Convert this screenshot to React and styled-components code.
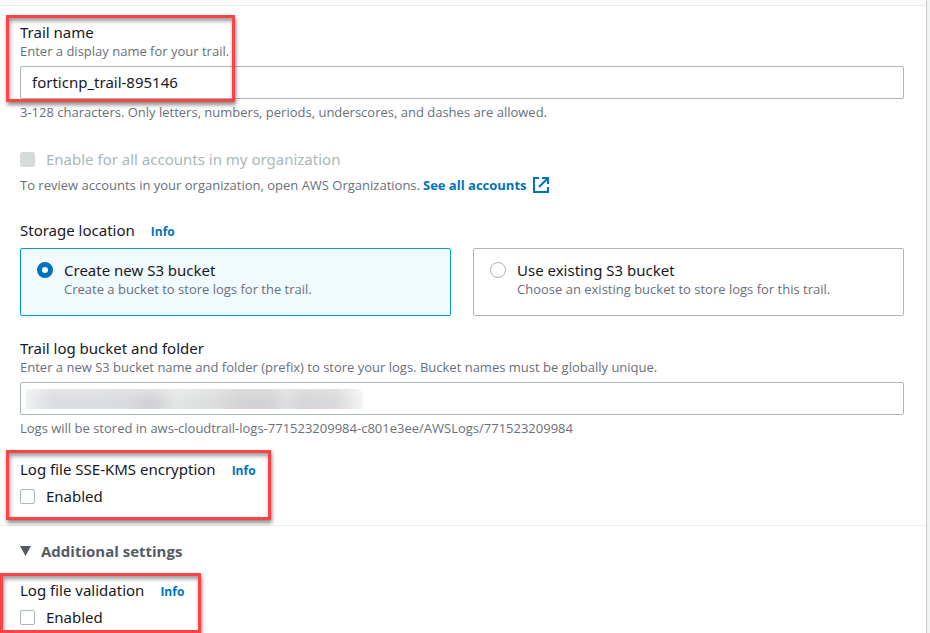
import React, { useState } from "react";
import styled, { createGlobalStyle, css } from "styled-components";

const GlobalStyle = createGlobalStyle`
  *, *::before, *::after { box-sizing: border-box; }
  body {
    margin: 0;
    background: #f2f3f3;
    color: #16191f;
    font-family: "Noto Sans", "Open Sans", sans-serif;
    font-size: 15px;
    line-height: 20px;
  }
`;

const Page = styled.main`
  padding-right: 3px;
  overflow: hidden;
`;

const Panel = styled.form`
  background: #fff;
  border-right: 1px solid #c3cccc;
  min-height: 100vh;
`;

const PanelHeader = styled.div`
  height: 6px;
  background: #fafafa;
  border-bottom: 1px solid #eaeded;
`;

const Section = styled.section`
  padding: 16px 22px 19px 20px;
`;

const AdditionalSection = styled.section`
  border-top: 1px solid #eaeded;
  padding: 15px 22px 6px 20px;
`;

const Group = styled.div`
  position: relative;
  display: flex;
  flex-direction: column;
  margin-top: ${({ $gap = 0 }) => $gap}px;
`;

const LabelRow = styled.div`
  display: flex;
  align-items: baseline;
  gap: 16px;
  height: 20px;
`;

const Label = styled.label`
  line-height: 20px;
`;

const Hint = styled.p`
  margin: 0;
  color: #687078;
  font-family: "Open Sans", "Noto Sans", sans-serif;
  font-size: 13px;
  line-height: 18px;
`;

const Link = styled.a`
  display: inline-flex;
  align-items: center;
  gap: 6px;
  color: #0073bb;
  font-family: "Open Sans", "Noto Sans", sans-serif;
  font-size: 13px;
  font-weight: 700;
  line-height: 18px;
  text-decoration: none;
`;

const InfoLink = styled(Link)`
  font-size: 12px;
`;

const ReviewLine = styled.div`
  display: flex;
  flex-wrap: wrap;
  align-items: center;
  gap: 3px;
  margin-top: 7px;
`;

const InputWrap = styled.div`
  position: relative;
  margin: 6px 0 4px;
`;

const TextInput = styled.input`
  display: block;
  width: 100%;
  height: 33px;
  padding: 0 11px 2px;
  border: 1px solid #aab7b8;
  border-radius: 2px;
  background: #fff;
  color: #16191f;
  font: inherit;
`;

const Redaction = styled.div`
  position: absolute;
  left: 6px;
  top: 7px;
  width: 337px;
  height: 20px;
  background:
    radial-gradient(ellipse 24px 14px at 124px 16px, rgba(200, 200, 204, 0.5), rgba(200, 200, 204, 0)),
    linear-gradient(180deg, rgba(255, 255, 255, 0.2), rgba(255, 255, 255, 0) 60%),
    linear-gradient(90deg, #f0f1f2, #dcdde0 8%, #dcdde0 20%, #d8d9db 38%, #e4e6e6 45%, #dcdddd 55%, #d3d3d5 64%, #d3d3d5 72%, #dedfe0 77%, #d6d6d8 82%, #dadadc 92%, #f4f5f5);
`;

const CheckRow = styled.label`
  display: flex;
  align-items: center;
  gap: 11px;
  line-height: 20px;
  color: ${({ $disabled }) => ($disabled ? "#aab7b8" : "#16191f")};
  margin-top: ${({ $gap = 0 }) => $gap}px;
`;

const Checkbox = styled.input`
  appearance: none;
  flex: none;
  width: 15px;
  height: 15px;
  margin: 1px 0 0;
  border: 1px solid #aab7b8;
  border-radius: 2px;
  background: #fff;
  &:checked { background: #0073bb; border-color: #0073bb; }
  &:disabled { background: #d5dbdb; border-color: #d5dbdb; }
`;

const Tiles = styled.div`
  display: grid;
  grid-template-columns: 1fr 1fr;
  gap: 22px;
  margin-top: 8px;
`;

const Tile = styled.label`
  display: flex;
  gap: 11px;
  padding: 11px 16px 17px;
  border: 1px solid #aab7b8;
  border-radius: 2px;
  ${({ $selected }) =>
    $selected &&
    css`
      border-color: #00a1c9;
      background: #f1faff;
    `}
`;

const Radio = styled.input`
  appearance: none;
  flex: none;
  width: 16px;
  height: 16px;
  margin: 2px 0 0;
  border: 1px solid #aab7b8;
  border-radius: 50%;
  background: #fff;
  &:checked { border: 5px solid #0073bb; }
`;

const ExpandButton = styled.button`
  display: flex;
  align-items: center;
  gap: 10px;
  padding: 0;
  border: 0;
  background: none;
  color: #545b64;
  font: inherit;
  font-family: "Open Sans", "Noto Sans", sans-serif;
  font-weight: 700;
`;

const Callout = styled.div`
  position: absolute;
  left: ${({ $left }) => $left}px;
  top: ${({ $top }) => $top}px;
  width: ${({ $width }) => $width}px;
  height: ${({ $height }) => $height}px;
  border: 3px solid #ff4343;
  box-shadow: 1px 3px 4px rgba(0, 0, 0, 0.45), inset 1px 3px 4px rgba(0, 0, 0, 0.4);
  pointer-events: none;
`;

const ExternalIcon = () => (
  <svg width="16" height="16" viewBox="0 0 16 16" fill="none" stroke="#0073bb" strokeWidth="2" aria-hidden="true">
    <path d="M6 1H1v14h14v-5M9 1h6v6M15 1L6 10" />
  </svg>
);

const Caret = () => (
  <svg width="11" height="10" viewBox="0 0 11 10" aria-hidden="true">
    <path d="M0 0h11L5.500 10z" fill="#545b64" />
  </svg>
);

function StorageTile({ value, title, text, selected, onSelect }) {
  return (
    <Tile $selected={selected}>
      <Radio type="radio" name="storage" value={value} checked={selected} onChange={() => onSelect(value)} />
      <div>
        <div>{title}</div>
        <Hint>{text}</Hint>
      </div>
    </Tile>
  );
}

function EnabledField({ title, gap, callout }) {
  return (
    <Group $gap={gap} role="group" aria-label={title}>
      <LabelRow>
        <span>{title}</span>
        <InfoLink href="#info">Info</InfoLink>
      </LabelRow>
      <CheckRow $gap={7}>
        <Checkbox type="checkbox" />
        Enabled
      </CheckRow>
      <Callout {...callout} />
    </Group>
  );
}

export default function App() {
  const [storage, setStorage] = useState("new");
  const [open, setOpen] = useState(true);

  return (
    <Page>
      <GlobalStyle />
      <Panel>
        <PanelHeader />
        <Section>
          <Group>
            <Label htmlFor="trail-name">Trail name</Label>
            <Hint>Enter a display name for your trail.</Hint>
            <InputWrap>
              <TextInput id="trail-name" defaultValue="forticnp_trail-895146" />
            </InputWrap>
            <Hint>3-128 characters. Only letters, numbers, periods, underscores, and dashes are allowed.</Hint>
            <Callout $left={-14} $top={-7} $width={229} $height={87} />
          </Group>

          <Group $gap={28}>
            <CheckRow $disabled>
              <Checkbox type="checkbox" disabled />
              Enable for all accounts in my organization
            </CheckRow>
            <ReviewLine>
              <Hint>To review accounts in your organization, open AWS Organizations.</Hint>
              <Link href="#accounts">
                See all accounts
                <ExternalIcon />
              </Link>
            </ReviewLine>
          </Group>

          <Group $gap={26} role="radiogroup" aria-label="Storage location">
            <LabelRow>
              <span>Storage location</span>
              <InfoLink href="#info">Info</InfoLink>
            </LabelRow>
            <Tiles>
              <StorageTile
                value="new"
                title="Create new S3 bucket"
                text="Create a bucket to store logs for the trail."
                selected={storage === "new"}
                onSelect={setStorage}
              />
              <StorageTile
                value="existing"
                title="Use existing S3 bucket"
                text="Choose an existing bucket to store logs for this trail."
                selected={storage === "existing"}
                onSelect={setStorage}
              />
            </Tiles>
          </Group>

          <Group $gap={22}>
            <Label htmlFor="bucket">Trail log bucket and folder</Label>
            <Hint>Enter a new S3 bucket name and folder (prefix) to store your logs. Bucket names must be globally unique.</Hint>
            <InputWrap>
              <TextInput id="bucket" />
              <Redaction />
            </InputWrap>
            <Hint>Logs will be stored in aws-cloudtrail-logs-771523209984-c801e3ee/AWSLogs/771523209984</Hint>
          </Group>

          <EnabledField
            title="Log file SSE-KMS encryption"
            gap={22}
            callout={{ $left: -14, $top: -9, $width: 265, $height: 70 }}
          />
        </Section>

        <AdditionalSection>
          <ExpandButton type="button" aria-expanded={open} onClick={() => setOpen(!open)}>
            <Caret />
            Additional settings
          </ExpandButton>
          {open && (
            <EnabledField
              title="Log file validation"
              gap={19}
              callout={{ $left: -20, $top: -7, $width: 201, $height: 60 }}
            />
          )}
        </AdditionalSection>
      </Panel>
    </Page>
  );
}
